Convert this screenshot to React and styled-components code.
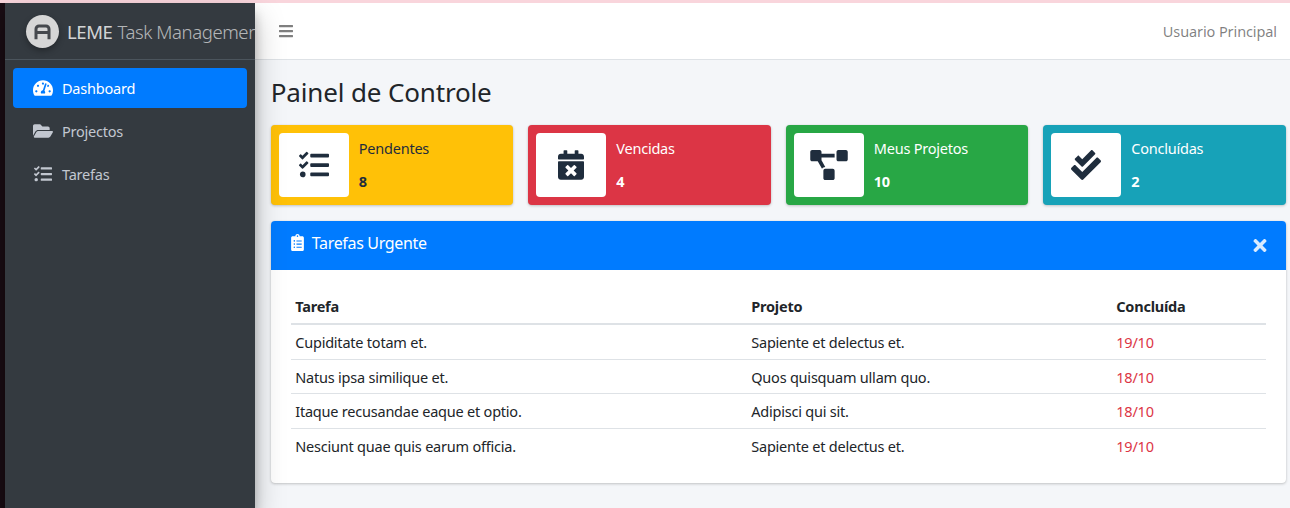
import React from "react";
import styled, { createGlobalStyle } from "styled-components";
import { FaTachometerAlt, FaFolderOpen, FaTasks, FaCalendarTimes, FaProjectDiagram, FaCheckDouble, FaClipboardList, FaTimes, FaBars } from "react-icons/fa";

const Global = createGlobalStyle`
  html, body { margin: 0; padding: 0; width: 1290px; height: 508px; overflow: hidden; background: #f4f6f9; }
  * { box-sizing: border-box; }
  body { font-family: "Noto Sans", sans-serif; font-size: 14.5px; letter-spacing: -0.22px; color: #212529; }
`;

const Page = styled.div`
  width: 1290px; height: 508px; display: flex; flex-direction: column; overflow: hidden;
`;
const TopStrip = styled.div`height: 3px; flex: none; background: #f9d5dc;`;
const Shell = styled.div`flex: 1; display: flex; min-height: 0;`;
const LeftEdge = styled.div`width: 5px; flex: none; background: #1a0d14;`;
const Sidebar = styled.aside`
  width: 250px; flex: none; background: #343a40; box-shadow: 0 14px 28px rgba(0,0,0,.25), 0 10px 10px rgba(0,0,0,.22);
  display: flex; flex-direction: column; z-index: 2;
`;
const Brand = styled.div`
  height: 57px; flex: none; display: flex; align-items: center; padding-left: 21px; gap: 8px;
  border-bottom: 1px solid #4b545c; color: rgba(255,255,255,.8); font-size: 18.5px; letter-spacing: -0.4px;
  white-space: nowrap; overflow: hidden;
`;
const Logo = styled.div`
  width: 33px; height: 33px; border-radius: 50%; background: #d6d6d6; flex: none;
  display: flex; align-items: center; justify-content: center; box-shadow: 0 3px 6px rgba(0,0,0,.3);
`;
const BrandLight = styled.span`font-weight: 300; margin-left: 5px; color: rgba(255,255,255,.65);`;
const Nav = styled.nav`padding: 8px; display: flex; flex-direction: column; gap: 3px;`;
const NavItem = styled.a`
  height: 40px; display: flex; align-items: center; gap: 9px; padding-left: 20px; border-radius: 4px;
  color: ${p => (p.$active ? "#fff" : "#c2c7d0")};
  background: ${p => (p.$active ? "#007bff" : "transparent")};
  svg { width: 20px; height: 18px; }
`;
const Main = styled.main`flex: 1; min-width: 0; display: flex; flex-direction: column;`;
const Topbar = styled.header`
  height: 57px; flex: none; background: #fff; border-bottom: 1px solid #dee2e6; letter-spacing: -0.1px;
  display: flex; align-items: center; justify-content: space-between; padding: 0 13px 0 23px; color: rgba(0,0,0,.5);
`;
const Content = styled.div`padding: 0 4.25px 0 15.75px;`;
const Title = styled.h1`margin: 0; font-size: 26px; font-weight: 400; line-height: 64px; height: 65px; letter-spacing: -0.15px; color: #212529;`;
const Cards = styled.div`display: grid; grid-template-columns: repeat(4, 1fr); gap: 15px; margin-bottom: 16px;`;
const Card = styled.div`
  height: 80px; border-radius: 4px; padding: 8px; display: flex; gap: 10px;
  background: ${p => p.$bg}; color: ${p => p.$fg};
  box-shadow: 0 0 1px rgba(0,0,0,.125), 0 1px 3px rgba(0,0,0,.2);
`;
const CardIcon = styled.div`
  width: 70px; height: 64px; background: #fff; border-radius: 4px; flex: none; color: #1f2d3d;
  display: flex; align-items: center; justify-content: center;
  svg { width: ${p => p.$w}px; height: 30px; }
`;
const CardBody = styled.div`display: flex; flex-direction: column; padding-top: 5px; gap: 13px;`;
const CardLabel = styled.div`line-height: 20px;`;
const CardValue = styled.div`font-weight: 700; line-height: 20px;`;
const Panel = styled.section`
  background: #fff; border-radius: 4px; height: 262px;
  box-shadow: 0 0 1px rgba(0,0,0,.125), 0 1px 3px rgba(0,0,0,.2);
`;
const PanelHead = styled.div`
  height: 49px; background: #007bff; color: #fff; border-radius: 4px 4px 0 0;
  display: flex; align-items: center; justify-content: space-between; padding: 0 18px; font-size: 16px; letter-spacing: -0.33px;
`;
const PanelTitle = styled.div`display: flex; align-items: center; gap: 6px; margin-top: -6px;`;
const CloseIcon = styled(FaTimes)`width: 14px; height: 19px; opacity: .85; margin-right: 1px;`;
const PanelBody = styled.div`padding: 19px 20px 20px;`;
const Table = styled.table`width: 100%; border-collapse: collapse;`;
const Th = styled.th`
  text-align: left; font-weight: 700; color: #212529; height: 35px; padding: 0 4.5px; border-bottom: 2px solid #dee2e6;
`;
const Tr = styled.tr`
  height: ${p => (p.$short ? "34px" : "35px")};
  td { padding-top: ${p => (p.$short ? "2px" : "0")}; }
`;
const Td = styled.td`
  padding: 0 4.5px; border-top: 1px solid #dee2e6; color: ${p => (p.$date ? "#dc3545" : "#212529")};
`;

const rows = [
  ["Cupiditate totam et.", "Sapiente et delectus et.", "19/10"],
  ["Natus ipsa similique et.", "Quos quisquam ullam quo.", "18/10"],
  ["Itaque recusandae eaque et optio.", "Adipisci qui sit.", "18/10"],
  ["Nesciunt quae quis earum officia.", "Sapiente et delectus et.", "19/10"],
];
const cards = [
  ["#ffc107", "#1f2d3d", FaTasks, "Pendentes", 8, 30],
  ["#dc3545", "#fff", FaCalendarTimes, "Vencidas", 4, 26],
  ["#28a745", "#fff", FaProjectDiagram, "Meus Projetos", 10, 38],
  ["#17a2b8", "#fff", FaCheckDouble, "Concluídas", 2, 30],
];

export default function App() {
  return (
    <Page>
      <Global />
      <TopStrip />
      <Shell>
        <LeftEdge />
        <Sidebar>
          <Brand>
            <Logo>
              <svg width="17" height="17" viewBox="0 0 17 17" fill="none" stroke="#45484d" strokeWidth="3">
                <path d="M2 16.3V6a3 3 0 0 1 3-3h7a3 3 0 0 1 3 3v10.3M2 9.5h13" />
              </svg>
            </Logo>
            <span>LEME<BrandLight>Task Management</BrandLight></span>
          </Brand>
          <Nav>
            <NavItem $active><FaTachometerAlt />Dashboard</NavItem>
            <NavItem><FaFolderOpen />Projectos</NavItem>
            <NavItem><FaTasks />Tarefas</NavItem>
          </Nav>
        </Sidebar>
        <Main>
          <Topbar><FaBars size={16} /><span>Usuario Principal</span></Topbar>
          <Content>
            <Title>Painel de Controle</Title>
            <Cards>
              {cards.map(([bg, fg, Icon, label, value, w]) => (
                <Card key={label} $bg={bg} $fg={fg}>
                  <CardIcon $w={w}><Icon /></CardIcon>
                  <CardBody><CardLabel>{label}</CardLabel><CardValue>{value}</CardValue></CardBody>
                </Card>
              ))}
            </Cards>
            <Panel>
              <PanelHead>
                <PanelTitle><FaClipboardList size={17} />Tarefas Urgente</PanelTitle>
                <CloseIcon />
              </PanelHead>
              <PanelBody>
                <Table>
                  <colgroup><col width="456" /><col width="365" /><col /></colgroup>
                  <thead><tr><Th>Tarefa</Th><Th>Projeto</Th><Th>Concluída</Th></tr></thead>
                  <tbody>
                    {rows.map((r, i) => (
                      <Tr key={r[0]} $short={i === 1}><Td>{r[0]}</Td><Td>{r[1]}</Td><Td $date>{r[2]}</Td></Tr>
                    ))}
                  </tbody>
                </Table>
              </PanelBody>
            </Panel>
          </Content>
        </Main>
      </Shell>
    </Page>
  );
}
